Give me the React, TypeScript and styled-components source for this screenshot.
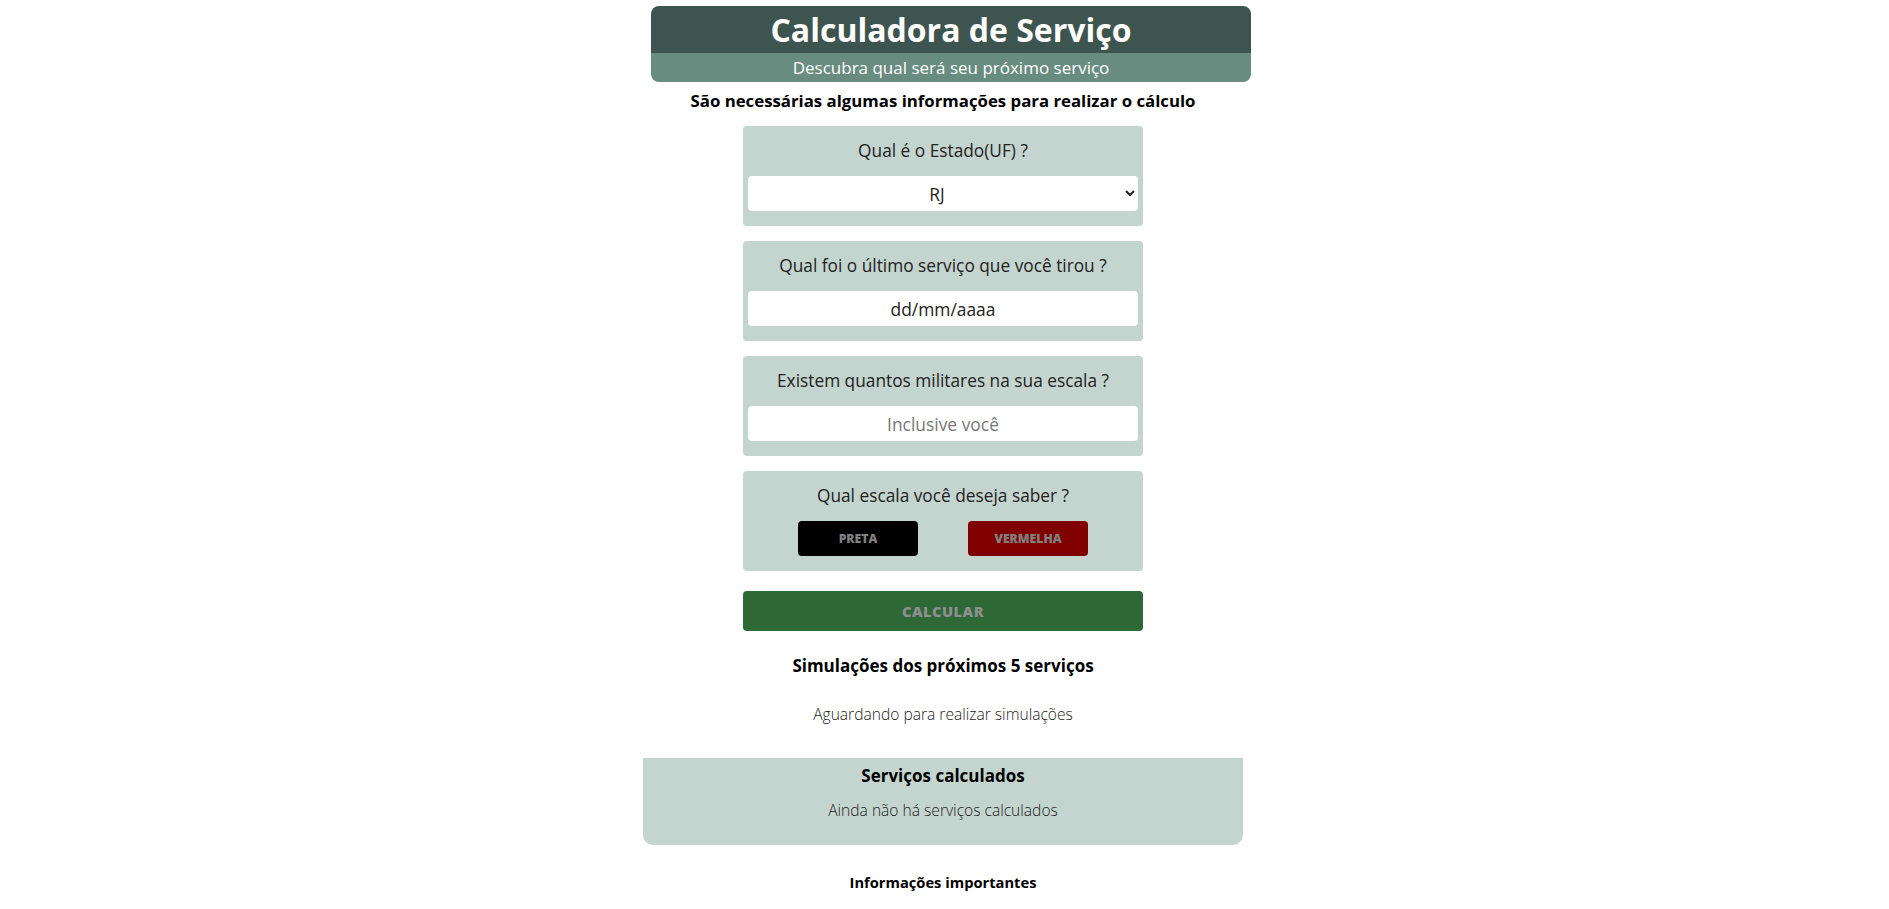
import styled, { createGlobalStyle } from 'styled-components'

const GlobalStyle = createGlobalStyle`
    body {
        margin: 0;
        background: #fff;
        font-family: "Open Sans", "Liberation Sans", sans-serif;
        color: #111;
    }
    * { box-sizing: border-box; }
`

const Page = styled.main`
    display: flex;
    flex-direction: column;
    align-items: center;
    padding: 6px 3px 20px 0;
`

const Header = styled.header`
    width: 600px;
    margin-left: 16px;
    border-radius: 8px;
    overflow: hidden;
    text-align: center;
    color: #fff;
`

const Title = styled.h1`
    margin: 0;
    height: 47px;
    line-height: 47px;
    background-color: #3e544e;
    font-size: 32px;
    font-weight: 700;
`

const Subtitle = styled.p`
    margin: 0;
    height: 29px;
    line-height: 29px;
    background-color: #698c80;
    font-size: 17px;
`

const Intro = styled.h2`
    margin: 9px 0 15px;
    font-size: 16.8px;
    line-height: 20px;
    font-weight: 700;
    color: #000;
`

const Card = styled.section`
    width: 400px;
    margin-bottom: 15px;
    padding: 14px 5px 15px;
    background-color: #c4d5cf;
    border-radius: 4px;
    text-align: center;
`

const Label = styled.label`
    display: block;
    margin-bottom: 15px;
    font-size: 17.3px;
    line-height: 21px;
    color: #222;
`

const fieldBase = `
    display: block;
    width: 100%;
    height: 35px;
    border: none;
    border-radius: 4px;
    background: #fff;
    font-family: "Open Sans", "Liberation Sans", sans-serif;
    font-size: 17.4px;
    text-align: center;
    color: #222;
    outline: none;
`

const Select = styled.select`
    ${fieldBase}
    text-align-last: center;
    padding: 0 4px;
`

const Input = styled.input<{ $dark?: boolean }>`
    ${fieldBase}
    &::placeholder {
        color: ${p => (p.$dark ? '#222' : '#777')};
    }
`

const Choices = styled.div`
    display: flex;
    justify-content: space-evenly;
`

const Choice = styled.button<{ $bg: string }>`
    width: 120px;
    height: 35px;
    border: none;
    border-radius: 4px;
    background-color: ${p => p.$bg};
    color: #808080;
    font-family: "Open Sans", "Liberation Sans", sans-serif;
    font-size: 12.2px;
    font-weight: 800;
    text-transform: uppercase;
`

const Calculate = styled.button`
    width: 400px;
    height: 40px;
    margin-top: 5px;
    border: none;
    border-radius: 4px;
    background-color: #2d6836;
    color: #8f8f8f;
    font-family: "Open Sans", "Liberation Sans", sans-serif;
    font-size: 14.6px;
    font-weight: 800;
    letter-spacing: 0.5px;
    text-transform: uppercase;
`

const SectionTitle = styled.h3`
    margin: 25px 0 0;
    font-size: 17px;
    line-height: 20px;
    font-weight: 700;
    color: #000;
`

const Note = styled.p`
    margin: 28px 0 34px;
    font-size: 15.6px;
    line-height: 20px;
    font-weight: 300;
    color: #222;
`

const Results = styled.section`
    width: 600px;
    height: 87px;
    padding-top: 8px;
    background-color: #c4d5cf;
    border-radius: 0 0 10px 10px;
    text-align: center;
`

const ResultsTitle = styled.h3`
    margin: 0;
    font-size: 17px;
    line-height: 20px;
    font-weight: 700;
    color: #000;
`

const ResultsNote = styled.p`
    margin: 14px 0 0;
    font-size: 15.6px;
    line-height: 20px;
    font-weight: 300;
    color: #222;
`

const Footer = styled.h4`
    margin: 28px 0 0;
    font-size: 14.7px;
    line-height: 18px;
    font-weight: 700;
    color: #000;
`

export default function App() {
    return <>
        <GlobalStyle />
        <Page>
            <Header>
                <Title>Calculadora de Serviço</Title>
                <Subtitle>Descubra qual será seu próximo serviço</Subtitle>
            </Header>

            <Intro>São necessárias algumas informações para realizar o cálculo</Intro>

            <Card>
                <Label htmlFor='uf'>Qual é o Estado(UF) ?</Label>
                <Select id='uf' defaultValue='RJ'>
                    <option>SP</option>
                    <option>RJ</option>
                    <option>MG</option>
                </Select>
            </Card>

            <Card>
                <Label htmlFor='last'>Qual foi o último serviço que você tirou ?</Label>
                <Input id='last' type='text' placeholder='dd/mm/aaaa' $dark />
            </Card>

            <Card>
                <Label htmlFor='count'>Existem quantos militares na sua escala ?</Label>
                <Input id='count' type='text' placeholder='Inclusive você' />
            </Card>

            <Card>
                <Label>Qual escala você deseja saber ?</Label>
                <Choices>
                    <Choice $bg='#000'>Preta</Choice>
                    <Choice $bg='#800000'>Vermelha</Choice>
                </Choices>
            </Card>

            <Calculate>Calcular</Calculate>

            <SectionTitle>Simulações dos próximos 5 serviços</SectionTitle>
            <Note>Aguardando para realizar simulações</Note>

            <Results>
                <ResultsTitle>Serviços calculados</ResultsTitle>
                <ResultsNote>Ainda não há serviços calculados</ResultsNote>
            </Results>

            <Footer>Informações importantes</Footer>
        </Page>
    </>
}
